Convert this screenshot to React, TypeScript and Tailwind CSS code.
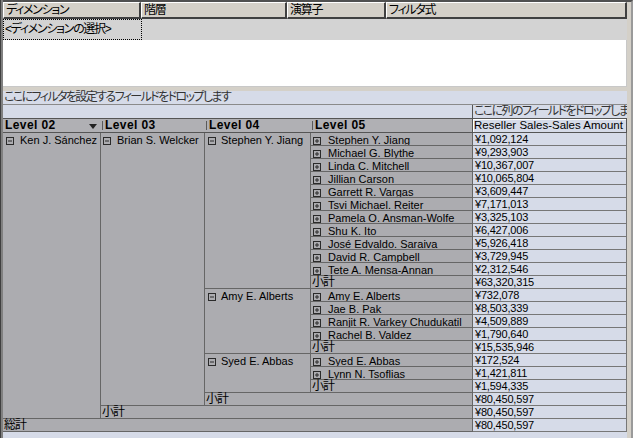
import React from "react";

const LINE = "border-[#666]";

function Box({ minus }: { minus?: boolean }) {
  return (
    <svg width="8" height="8" viewBox="0 0 8 8" className="shrink-0 mt-[4px]">
      <rect x="0.5" y="0.5" width="7" height="7" fill="none" stroke="#2a2a2a" />
      <line x1="2" y1="4" x2="6" y2="4" stroke="#2a2a2a" />
      {!minus && <line x1="4" y1="2" x2="4" y2="6" stroke="#2a2a2a" />}
    </svg>
  );
}

function Amt({ v }: { v: string }) {
  return (
    <div className="w-[154px] h-[13px] shrink-0 border-r border-b border-[#777] bg-[#d6dbe8] text-[11px] tracking-[-0.2px] leading-[13px] pl-[2px] whitespace-nowrap overflow-hidden">
      {v}
    </div>
  );
}

function Leaf({ name, amt }: { name: string; amt: string }) {
  return (
    <div className="flex h-[13px]">
      <div className={`w-[162px] h-[13px] flex gap-[7px] pl-[2px] border-r border-b ${LINE} bg-[#acacb0] text-[11px] leading-[13px] whitespace-nowrap overflow-hidden`}>
        <Box />
        <span className="pt-[1px]">{name}</span>
      </div>
      <Amt v={amt} />
    </div>
  );
}

function Sub({ w, amt, label }: { w: string; amt: string; label: string }) {
  return (
    <div className="flex h-[13px]">
      <div className={`${w} h-[13px] border-r border-b ${LINE} bg-[#acacb0] text-[12px] leading-[13px] tracking-[-1px] pl-[1px] whitespace-nowrap`}>
        {label}
      </div>
      <Amt v={amt} />
    </div>
  );
}

function Group({ name, rows, sub }: { name: string; rows: string[][]; sub: string }) {
  return (
    <div className="flex">
      <div className={`w-[106px] shrink-0 flex gap-[5px] pl-[3px] border-r border-b ${LINE} bg-[#acacb0] text-[11px] leading-[13px] whitespace-nowrap overflow-hidden`}>
        <Box minus />
        <span className="pt-[1px]">{name}</span>
      </div>
      <div className="flex flex-col">
        {rows.map((r) => (
          <Leaf key={r[0]} name={r[0]} amt={r[1]} />
        ))}
        <Sub w="w-[162px]" label="小計" amt={sub} />
      </div>
    </div>
  );
}

const jiang = [
  ["Stephen Y. Jiang", "¥1,092,124"],
  ["Michael G. Blythe", "¥9,293,903"],
  ["Linda C. Mitchell", "¥10,367,007"],
  ["Jillian Carson", "¥10,065,804"],
  ["Garrett R. Vargas", "¥3,609,447"],
  ["Tsvi Michael. Reiter", "¥7,171,013"],
  ["Pamela O. Ansman-Wolfe", "¥3,325,103"],
  ["Shu K. Ito", "¥6,427,006"],
  ["José Edvaldo. Saraiva", "¥5,926,418"],
  ["David R. Campbell", "¥3,729,945"],
  ["Tete A. Mensa-Annan", "¥2,312,546"],
];
const amy = [
  ["Amy E. Alberts", "¥732,078"],
  ["Jae B. Pak", "¥8,503,339"],
  ["Ranjit R. Varkey Chudukatil", "¥4,509,889"],
  ["Rachel B. Valdez", "¥1,790,640"],
];
const syed = [
  ["Syed E. Abbas", "¥172,524"],
  ["Lynn N. Tsoflias", "¥1,421,811"],
];

function HeadCell({ w, label, first, tri }: { w: string; label: string; first?: boolean; tri?: boolean }) {
  return (
    <div className={`${w} h-[13px] shrink-0 flex items-start`}>
      {first ? (
        <div className="w-[2px]" />
      ) : (
        <div className="w-px h-[9px] mt-[2px] bg-[#5a5a5a] ml-[1px] mr-[2px]" />
      )}
      <span className="text-[12px] leading-[13px] font-bold tracking-[0.4px] whitespace-nowrap">{label}</span>
      {tri && (
        <svg width="8" height="5" viewBox="0 0 8 5" className="ml-auto mr-[4px] mt-[5px]">
          <path d="M0 0 L8 0 L4 5 Z" fill="#222" />
        </svg>
      )}
    </div>
  );
}

export default function App() {
  return (
    <div className="w-[633px] h-[438px] overflow-hidden bg-[#d4d0c8] flex font-['Liberation_Sans','Noto_Sans_CJK_JP',sans-serif] [font-feature-settings:'palt'] text-black">
      <div className="w-[3px] h-full shrink-0 bg-[#808080] border-l border-[#404040]" />
      <div className="w-[624px] shrink-0 flex flex-col">
        {/* top filter grid */}
        <div className="h-[87px] shrink-0 flex flex-col bg-white border-t-2 border-[#505050]">
          <div className="h-[17px] flex shrink-0">
            {[
              ["w-[138px]", "ディメンション"],
              ["w-[146px]", "階層"],
              ["w-[99px]", "演算子"],
              ["w-[241px]", "フィルタ式"],
            ].map(([w, t]) => (
              <div
                key={t}
                className={`${w} h-[17px] bg-[#d4d0c8] border-t border-l border-white border-r-2 border-b-2 border-r-[#404040] border-b-[#404040] text-[12px] tracking-[-1.3px] leading-[14px] pl-[2px] whitespace-nowrap overflow-hidden`}
              >
                {t}
              </div>
            ))}
          </div>
          <div className="h-[21px] flex shrink-0 bg-[#d3d3d3]">
            <div className="w-[139px] h-[21px] border border-dotted border-black text-[12px] tracking-[-1.3px] leading-[18px] pl-[1px] whitespace-nowrap">
              {"<ディメンションの選択>"}
            </div>
          </div>
          <div className="flex-1 bg-white border-r border-b border-[#c8c8c8]" />
        </div>
        <div className="h-[4px] shrink-0 bg-[#d4d0c8]" />
        {/* pivot */}
        <div className="flex-1 flex flex-col bg-[#d6dbe8]">
          <div className="h-[14px] shrink-0 border-b border-[#8a8a8a] text-[12px] tracking-[-1.6px] leading-[13px] text-[#333] pl-[1px] whitespace-nowrap">
            ここにフィルタを設定するフィールドをドロップします
          </div>
          <div className="h-[13px] shrink-0 flex">
            <div className="flex-1" />
            <div className="w-[155px] border-l border-[#555] text-[12px] tracking-[-1.6px] leading-[13px] text-[#333] pl-[1px] whitespace-nowrap overflow-hidden">
              ここに列のフィールドをドロップします
            </div>
          </div>
          <div className="h-[15px] shrink-0 flex border-t border-b border-[#555] bg-[#b0b0b4]">
            <HeadCell w="w-[98px]" label="Level 02" first tri />
            <HeadCell w="w-[104px]" label="Level 03" />
            <HeadCell w="w-[106px]" label="Level 04" />
            <HeadCell w="w-[161px]" label="Level 05" />
            <div className="w-[155px] h-[13px] border-l border-r border-[#555] bg-[#d6dbe8] shadow-[inset_1px_1px_0_#fff] text-[11.5px] leading-[13px] pl-[1px] whitespace-nowrap overflow-hidden">
              Reseller Sales-Sales Amount
            </div>
          </div>
          {/* body */}
          <div className="flex shrink-0">
            <div className={`w-[98px] shrink-0 flex gap-[6px] pl-[3px] border-r border-b ${LINE} bg-[#acacb0] text-[11px] leading-[13px] whitespace-nowrap overflow-hidden`}>
              <Box minus />
              <span className="pt-[1px]">Ken J. Sánchez</span>
            </div>
            <div className="flex flex-col">
              <div className="flex">
                <div className={`w-[104px] shrink-0 flex gap-[6px] pl-[2px] border-r border-b ${LINE} bg-[#acacb0] text-[11px] leading-[13px] whitespace-nowrap overflow-hidden`}>
                  <Box minus />
                  <span className="pt-[1px]">Brian S. Welcker</span>
                </div>
                <div className="flex flex-col">
                  <Group name="Stephen Y. Jiang" rows={jiang} sub="¥63,320,315" />
                  <Group name="Amy E. Alberts" rows={amy} sub="¥15,535,946" />
                  <Group name="Syed E. Abbas" rows={syed} sub="¥1,594,335" />
                  <Sub w="w-[268px]" label="小計" amt="¥80,450,597" />
                </div>
              </div>
              <Sub w="w-[372px]" label="小計" amt="¥80,450,597" />
            </div>
          </div>
          <Sub w="w-[470px]" label="総計" amt="¥80,450,597" />
          <div className="flex-1" />
        </div>
      </div>
      <div className="w-[6px] h-full shrink-0 bg-[#d4d0c8] border-t-2 border-t-[#505050] border-r-2 border-r-[#9a9a9a]" />
    </div>
  );
}
